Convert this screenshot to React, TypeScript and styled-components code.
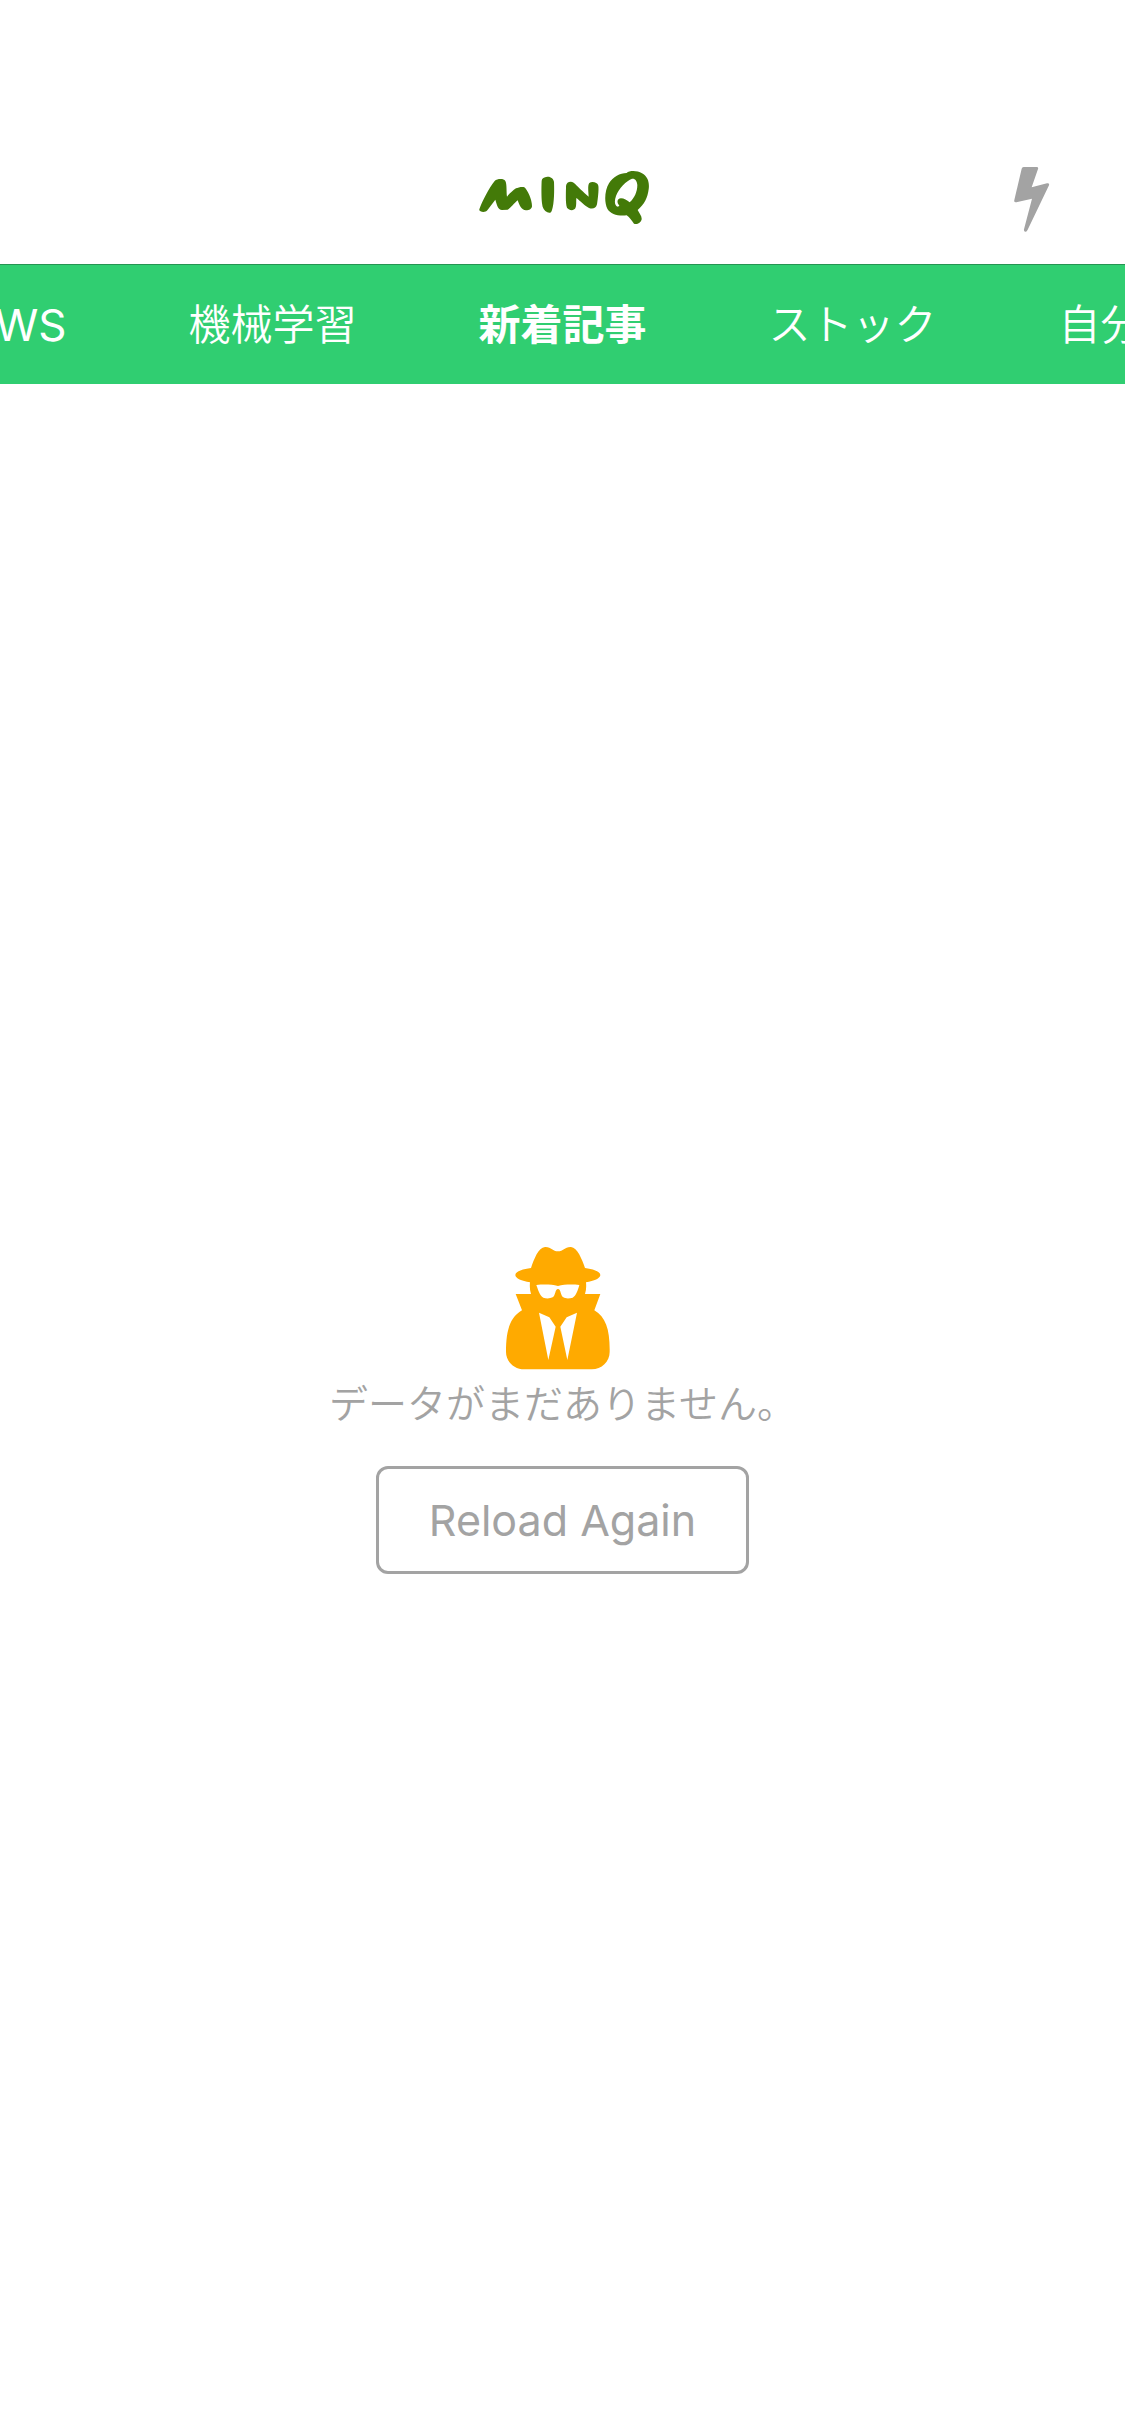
import React, { useState } from "react";
import styled, { createGlobalStyle } from "styled-components";

const GlobalStyle = createGlobalStyle`
  *, *::before, *::after { box-sizing: border-box; }
  body {
    margin: 0;
    background: #ffffff;
    font-family: Inter, "Noto Sans CJK JP", sans-serif;
    -webkit-font-smoothing: antialiased;
  }
  button { font: inherit; cursor: pointer; }
`;

const Screen = styled.div`
  display: flex;
  flex-direction: column;
  min-height: 100vh;
  overflow: hidden;
`;

const Header = styled.header`
  display: grid;
  grid-template-columns: 1fr auto 1fr;
  align-items: center;
  height: 264px;
  padding: 130px 75px 0;
`;

const Brand = styled.h1`
  grid-column: 2;
  display: flex;
  margin: 0;
`;

const IconButton = styled.button`
  justify-self: end;
  display: flex;
  padding: 0;
  border: 0;
  background: none;
  color: #a3a3a3;
`;

const TabBar = styled.nav`
  display: grid;
  grid-template-columns: repeat(5, 168px);
  gap: 122px;
  justify-content: center;
  align-items: center;
  height: 120px;
  border-top: 1px solid #269452;
  background: #30ce71;
  overflow: hidden;
`;

const Tab = styled.button<{ $active: boolean; $align: string; $latin?: boolean }>`
  padding: 0;
  border: 0;
  background: none;
  color: #ffffff;
  font-size: ${(p) => (p.$latin ? 44 : 42)}px;
  line-height: 60px;
  font-weight: ${(p) => (p.$active ? 700 : p.$latin ? 400 : 350)};
  text-align: ${(p) => p.$align};
  white-space: nowrap;
`;

const Empty = styled.main`
  flex: 1;
  display: flex;
  flex-direction: column;
  align-items: center;
  justify-content: center;
`;

const Message = styled.p`
  margin: 4px 0 32px;
  color: #a3a3a3;
  font-size: 39px;
  font-weight: 350;
  line-height: 60px;
`;

const ReloadButton = styled.button`
  height: 108px;
  padding: 0 50px;
  border: 3px solid #a3a3a3;
  border-radius: 12px;
  background: none;
  color: #a3a3a3;
  && { font-size: 43px; }
`;

const Logo = () => (
  <svg width="173" height="56" viewBox="48 57 519 168" fill="#437a08" role="img" aria-label="MINQ">
    <path d="M58 178C56 186 76 189 82 181L106 149C111 165 113 178 126 180L143 179C150 176 164 158 173 151C178 165 184 180 198 181C208 181 216 176 216 168C216 150 203 120 193 112C188 109 174 112 168 115C158 121 146 134 141 140C139 126 141 102 136 93C131 85 112 86 104 93C88 112 66 155 58 178Z" />
    <path d="M262 80C272 79 281 86 282 96C283 120 283 160 276 180C274 189 268 190 262 187C253 183 247 174 246 160C244 140 244 110 245 92C246 84 252 81 262 80Z" />
    <path d="M318 108C319 96 332 92 341 98C352 107 371 128 386 140C386 128 382 106 388 99C396 93 413 97 415 107C417 120 413 150 411 163C408 175 398 178 387 174C375 168 360 152 349 144C348 155 350 168 346 175C342 182 328 183 321 173C316 160 318 125 318 108Z" />
    <path
      fillRule="evenodd"
      d="M500 69C508 61 532 61 546 70C563 80 569 96 566 118C563 143 553 164 533 180C538 190 546 198 545 208C543 219 530 225 522 221C516 213 509 202 500 196C475 199 452 193 442 176C432 155 434 122 447 100C459 80 480 69 500 69ZM516 86C500 92 476 115 468 138C462 155 464 168 474 170C478 170 479 167 476 164C469 155 473 146 483 145C492 145 501 151 509 157C523 145 532 125 532 105C531 93 526 85 516 86Z"
    />
  </svg>
);

const Bolt = () => (
  <svg width="37" height="70" viewBox="69 36 111 210" fill="currentColor" aria-hidden="true">
    <path d="M101 51H140Q146 51 144 57L125 112L171 100Q179 99 177 106L113 239Q110 247 105 245Q101 244 102 238L126 146L79 157Q71 158 73 150L95 56Q96 51 101 51Z" />
  </svg>
);

const Detective = () => (
  <svg width="113" height="124" viewBox="48 48 339 372" fill="#ffaa00" aria-hidden="true">
    <path
      fillRule="evenodd"
      d="M123 114C132 88 145 52 165 51C184 50 188 64 204 64C220 64 224 50 243 51C262 52 276 88 285 114C310 117 331 125 331 135C331 145 312 153 288 157Q290 178 285 192H331L313 241C348 262 360 300 359 366C359 395 335 418 305 418H103C73 418 48 395 48 366C48 300 60 262 96 241L77 192H123Q118 178 120 157C95 153 76 145 76 135C76 125 97 117 123 114ZM139 165C160 163 185 163 204 168C223 163 247 163 268 165C264 180 258 198 248 203C238 206 226 206 220 202C211 196 213 177 204 177C195 177 197 196 188 202C180 206 168 206 160 203C149 198 144 178 139 165ZM147 248L178 262L197 290L175 390ZM261 248L230 262L211 290L232 390Z"
    />
  </svg>
);

const tabs = [
  { label: "NEWS", align: "right", latin: true },
  { label: "機械学習", align: "center" },
  { label: "新着記事", align: "center" },
  { label: "ストック", align: "center" },
  { label: "自分", align: "left" },
];

export default function App() {
  const [active, setActive] = useState("新着記事");

  return (
    <>
      <GlobalStyle />
      <Screen lang="ja">
        <Header>
          <Brand>
            <Logo />
          </Brand>
          <IconButton type="button" aria-label="Flash">
            <Bolt />
          </IconButton>
        </Header>
        <TabBar>
          {tabs.map((tab) => (
            <Tab
              key={tab.label}
              type="button"
              $active={tab.label === active}
              $align={tab.align}
              $latin={tab.latin}
              onClick={() => setActive(tab.label)}
            >
              {tab.label}
            </Tab>
          ))}
        </TabBar>
        <Empty>
          <Detective />
          <Message>データがまだありません。</Message>
          <ReloadButton type="button">Reload Again</ReloadButton>
        </Empty>
      </Screen>
    </>
  );
}
